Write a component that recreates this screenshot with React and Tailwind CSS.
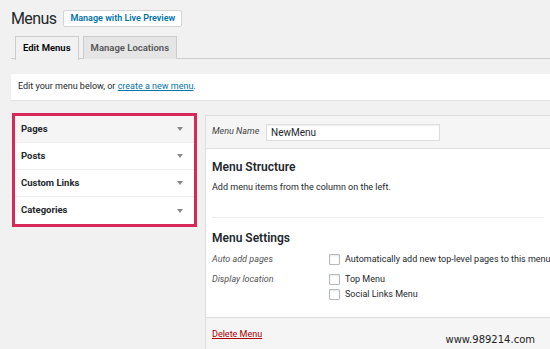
import React from 'react';

const font = { fontFamily: 'Roboto, "Liberation Sans", sans-serif' };

const Caret = () => (
  <svg width="6" height="4" viewBox="0 0 6 4" className="text-[#8a8a8a]">
    <path d="M0 0h6L3 4z" fill="currentColor" />
  </svg>
);

const Checkbox = () => (
  <span className="inline-block w-[11px] h-[11px] shrink-0 bg-white border border-[#b4b9be] rounded-[1px] shadow-[inset_0_1px_2px_rgba(0,0,0,0.1)]" />
);

const sections = ['Pages', 'Posts', 'Custom Links', 'Categories'];

export default function App() {
  return (
    <div className="w-full h-[349px] overflow-hidden bg-[#f1f1f1] text-[#23282d] pt-[8px] pl-[11px]" style={font}>
      {/* title */}
      <div className="flex items-center h-[21px]">
        <h1 className="text-[16px] leading-[21px] font-normal tracking-[-0.6px]">Menus</h1>
        <button className="ml-[7px] h-[17px] px-[6px] bg-white border border-[#d5d5d5] rounded-[2px] text-[9px] font-semibold text-[#0073aa] leading-none">
          Manage with Live Preview
        </button>
      </div>

      {/* tabs */}
      <div className="mt-[7px] flex gap-[4px] pl-[4px] border-b border-[#ccc] h-[23px]">
        <div className="h-[24px] px-[7px] flex items-center border border-b-0 border-[#ccc] bg-[#f1f1f1] text-[9.5px] font-semibold text-black">
          Edit Menus
        </div>
        <div className="h-[23px] px-[7px] flex items-center border border-b-0 border-[#ccc] bg-[#e5e5e5] text-[9.5px] font-semibold text-[#555]">
          Manage Locations
        </div>
      </div>

      {/* notice */}
      <div className="mt-[15px] h-[26px] bg-white shadow-[0_1px_1px_rgba(0,0,0,0.06)] flex items-center px-[7px] text-[9px]">
        Edit your menu below, or&nbsp;
        <a className="text-[#0073aa] underline">create a new menu</a>.
      </div>

      {/* columns */}
      <div className="mt-[13px] flex items-start">
        <div className="ml-[1px] w-[185px] border-[3px] border-[#d6295a]">
          {sections.map((s, i) => (
            <div
              key={s}
              className={`h-[27px] flex items-center justify-between pl-[6px] pr-[11px] text-[9.5px] font-bold ${i === 0 ? 'bg-[#f5f5f5]' : 'bg-white'} ${i < 3 ? 'border-b border-[#eee]' : ''}`}
            >
              <span>{s}</span>
              <Caret />
            </div>
          ))}
        </div>

        <div className="ml-[8px] mt-[2px] flex-1 min-w-0 border-l border-t border-[#ddd] bg-white h-[240px] flex flex-col overflow-hidden">
          <div className="h-[33px] shrink-0 bg-[#f5f5f5] border-b border-[#dfdfdf] flex items-center pl-[6px]">
            <span className="italic text-[9px] w-[54px] text-[#444]">Menu Name</span>
            <div className="w-[174px] h-[17px] bg-white border border-[#ddd] shadow-[inset_0_1px_2px_rgba(0,0,0,0.07)] flex items-center px-[4px] text-[10px]">
              NewMenu
            </div>
          </div>

          <div className="h-[168px] shrink-0 px-[6px] pt-[10px] whitespace-nowrap">
            <h3 className="text-[12px] font-semibold leading-[16px]">Menu Structure</h3>
            <p className="mt-[6px] text-[9px] leading-[12px]">Add menu items from the column on the left.</p>

            <div className="mt-[24px] border-t border-[#eee] pt-[12px]">
              <h3 className="text-[12px] font-semibold leading-[16px]">Menu Settings</h3>
              <div className="mt-[7px] flex items-center text-[9px] leading-[12px]">
                <span className="italic w-[117px] shrink-0 text-[#555]">Auto add pages</span>
                <Checkbox />
                <span className="ml-[5px]">Automatically add new top-level pages to this menu</span>
              </div>
              <div className="mt-[8px] flex items-start text-[9px] leading-[12px]">
                <span className="italic w-[117px] shrink-0 text-[#555]">Display location</span>
                <div className="flex flex-col gap-[3px]">
                  <div className="flex items-center">
                    <Checkbox />
                    <span className="ml-[5px]">Top Menu</span>
                  </div>
                  <div className="flex items-center">
                    <Checkbox />
                    <span className="ml-[5px]">Social Links Menu</span>
                  </div>
                </div>
              </div>
            </div>
          </div>

          <div className="flex-1 bg-[#f5f5f5] border-t border-[#ddd] flex items-center justify-between pl-[6px] pr-[15px]">
            <a className="-mt-[3px] text-[9px] text-[#a00] underline">Delete Menu</a>
            <span className="mt-[6px] text-[10px] text-[#222]" style={{ fontFamily: '"DejaVu Sans", sans-serif' }}>
              www.989214.com
            </span>
          </div>
        </div>
      </div>
    </div>
  );
}
